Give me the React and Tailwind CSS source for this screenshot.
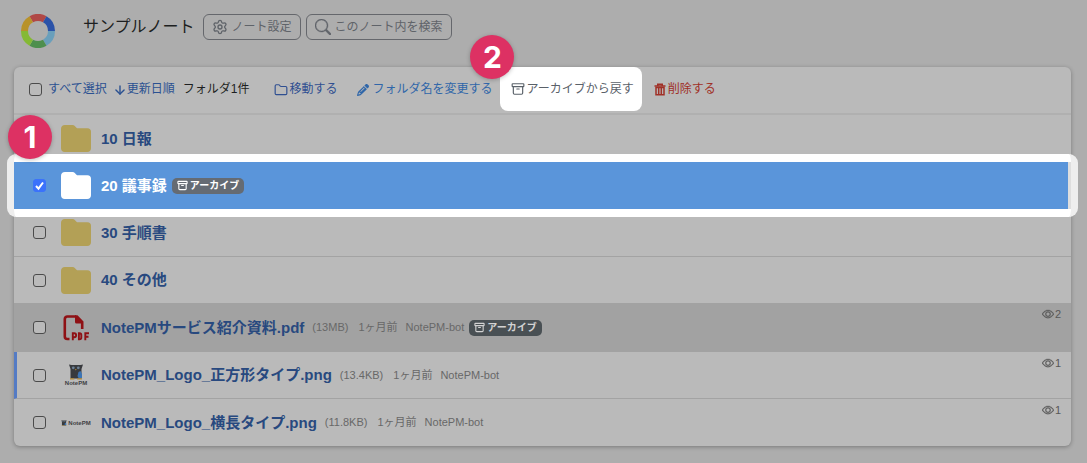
import { useState } from "react";
import { Archive, ArrowDown, Folder, Settings } from "lucide-react";
import { BsEye, BsSearch } from "react-icons/bs";
import { FaPencil } from "react-icons/fa6";

const folders = [
  { id: "f10", name: "10 日報" },
  { id: "f20", name: "20 議事録", archived: true },
  { id: "f30", name: "30 手順書" },
  { id: "f40", name: "40 その他", divider: true },
];

const files = [
  { id: "pdf", name: "NotePMサービス紹介資料.pdf", size: "13MB", views: 2, icon: PdfIcon, archived: true },
  { id: "square", name: "NotePM_Logo_正方形タイプ.png", size: "13.4KB", views: 1, icon: SquareLogo, unread: true },
  { id: "wide", name: "NotePM_Logo_横長タイプ.png", size: "11.8KB", views: 1, icon: WideLogo },
];

function RingLogo() {
  const colors = ["#b04846", "#2b52a8", "#6a9fbb", "#4e8f4e", "#85b935", "#b8922a"];
  const point = (deg, r) => {
    const a = (deg * Math.PI) / 180;
    return `${17 + r * Math.sin(a)} ${17 - r * Math.cos(a)}`;
  };
  return (
    <svg viewBox="0 0 34 34" className="h-[34px] w-[34px]" aria-hidden="true">
      {colors.map((color, i) => {
        const from = i * 60 - 30;
        const to = from + 60;
        return (
          <path
            key={color}
            fill={color}
            d={`M${point(from, 17)}A17 17 0 0 1 ${point(to, 17)}L${point(to, 10)}A10 10 0 0 0 ${point(from, 10)}Z`}
          />
        );
      })}
    </svg>
  );
}

function FolderIcon({ className }) {
  return (
    <svg viewBox="0 0 30 27" className={`h-[27px] w-[30px] ${className}`} fill="currentColor" aria-hidden="true">
      <path d="M4 0h7.500c1 0 1.700.3 2.300.9l1.400 1.500c.6.600 1.200.9 2 .9H26.500C28.700 3.300 30 4.600 30 6.800v16.400c0 2.400-1.400 3.800-3.800 3.800H3.800C1.400 27 0 25.600 0 23.200V4C0 1.500 1.500 0 4 0z" />
    </svg>
  );
}

function TrashIcon() {
  return (
    <svg viewBox="0 0 12 13" className="h-[13px] w-3" fill="none" stroke="currentColor" aria-hidden="true">
      <path d="M.5 3h11M3.800 3V1.200h4.400V3" strokeWidth="1.600" />
      <path d="M2 4.500h8v7.200H2zM4.700 5v6.500M7.300 5v6.500" strokeWidth="1.500" />
    </svg>
  );
}

function PdfIcon() {
  return (
    <svg viewBox="0 0 26 26" className="h-[26px] w-[26px]" fill="none" stroke="#8f1115" aria-hidden="true">
      <path d="M6.500 24H4.300a2.500 2.500 0 0 1-2.500-2.500V4a2.500 2.500 0 0 1 2.500-2.500H13" strokeWidth="2.600" />
      <path d="M12 .2h2.500L20.500 6.500V14h-2.600V8.500h-4.400A1.500 1.500 0 0 1 12 7z" fill="#8f1115" stroke="none" />
      <path d="M9.800 25.300v-7h1.400a1.900 1.900 0 0 1 0 3.900H9.800" strokeWidth="1.900" />
      <path d="M15.900 18.300v6.100h.700c1.100 0 1.700-.600 1.700-1.800v-2.500c0-1.200-.6-1.800-1.700-1.800z" strokeWidth="1.900" />
      <path d="M22.300 25.300v-7H26M22.300 21.700h3.200" strokeWidth="1.900" />
    </svg>
  );
}

function Owl({ className }) {
  return (
    <svg viewBox="0 0 14 16" className={className} aria-hidden="true">
      <path d="M0 .5 2.500 1h9L14 .5 12.500 5v9.500h-11V5z" fill="#383a3e" />
      <circle cx="4.300" cy="3.800" r="1.400" fill="#6d8296" />
      <circle cx="9.300" cy="3.800" r="1.400" fill="#6d8296" />
      <path d="M6 5h1.600l-.8 1.500z" fill="#b78b35" />
      <path d="M9.500 8 11.500 7l1.500 3v4l-3 1-1.500-3z" fill="#3c74b4" />
      <path d="M1 14.200h4l.5 1.300H1zM8.500 14.200H13v1.300H8z" fill="#b78b35" />
    </svg>
  );
}

function SquareLogo() {
  return (
    <span className="flex flex-col items-center">
      <Owl className="h-4 w-3.5" />
      <span className="text-[6px] leading-[6px] font-bold text-[#3f4144]">NotePM</span>
    </span>
  );
}

function WideLogo() {
  return (
    <span className="flex items-center gap-px">
      <Owl className="h-1.5 w-1.5" />
      <span className="text-[6px] leading-[6px] font-bold text-[#3f4144]">NotePM</span>
    </span>
  );
}

function Check({ checked, onChange, label }) {
  return (
    <span className="relative flex h-[13px] w-[13px] shrink-0">
      <input
        type="checkbox"
        aria-label={label}
        checked={checked}
        onChange={onChange}
        className="peer h-[13px] w-[13px] appearance-none rounded-[3px] border border-[#4b4b4b] bg-[#bababa] checked:border-[#3b72fb] checked:bg-[#3b72fb]"
      />
      <svg
        viewBox="0 0 13 13"
        className="pointer-events-none absolute inset-0 hidden peer-checked:block"
        fill="none"
        stroke="#fff"
        strokeWidth="2"
        aria-hidden="true"
      >
        <path d="M3 7l2.500 2.700L10 3.500" />
      </svg>
    </span>
  );
}

function ArchiveBadge({ className }) {
  return (
    <span className={`flex h-4 items-center gap-0.5 rounded-[5px] px-[5px] text-[10px] leading-4 font-bold ${className}`}>
      <Archive className="h-[11px] w-[11px]" strokeWidth={2.4} />
      アーカイブ
    </span>
  );
}

function Step({ className, children }) {
  return (
    <span
      className={`absolute z-20 flex h-11 w-11 items-center justify-center rounded-full bg-[#dd3163] font-[Inter,sans-serif] text-3xl font-bold text-white shadow-[0_1px_4px_rgba(0,0,0,0.25)] ${className}`}
    >
      {children}
    </span>
  );
}

function FolderRow({ folder, selected, onToggle }) {
  const border = folder.divider ? "border-t border-[#a3a3a3]" : "";
  return (
    <li className={`relative h-[47px] ${selected ? "z-10" : ""}`}>
      {selected && (
        <span className="absolute -inset-x-[7px] -inset-y-2 rounded-[9px] border-x-[7px] border-[#eeeeee] bg-white" />
      )}
      <div
        className={`relative flex h-full items-center pl-[19px] ${
          selected ? "border-r-[3px] border-[#dedede] bg-[#5a95da] text-white" : `text-[#28497f] ${border}`
        }`}
      >
        <Check checked={selected} onChange={onToggle} label={folder.name} />
        <FolderIcon className={`ml-[15px] ${selected ? "text-white" : "text-[#b3a056]"}`} />
        <a href="#" className="ml-2.5 text-[15px] font-bold">
          {folder.name}
        </a>
        {folder.archived && <ArchiveBadge className="ml-[5px] bg-[#656b73] text-white" />}
      </div>
      {selected && <Step className="-top-[47px] -left-1.5">1</Step>}
    </li>
  );
}

function FileRow({ file, selected, onToggle, divider }) {
  const Icon = file.icon;
  return (
    <li
      className={`flex items-center ${file.archived ? "h-[49px] bg-[#a2a2a2]" : "h-[47px]"} ${
        file.unread ? "border-l-[3px] border-l-[#547bc4] pl-4" : "pl-[19px]"
      } ${divider ? "border-b border-b-[#a3a3a3]" : ""}`}
    >
      <Check checked={selected} onChange={onToggle} label={file.name} />
      <span className="ml-[15px] flex w-[30px] shrink-0 justify-center">
        <Icon />
      </span>
      <a href="#" className="ml-2.5 text-[15px] font-bold whitespace-nowrap text-[#28497f]">
        {file.name}
      </a>
      <span className="ml-2 flex gap-2.5 text-[11px] whitespace-nowrap text-[#686868]">
        <span>({file.size})</span>
        <span>1ヶ月前</span>
        <span className="-ml-0.5">NotePM-bot</span>
      </span>
      {file.archived && <ArchiveBadge className="ml-[5px] bg-[#495054] text-[#d2d2d2]" />}
      <span className="mt-[3px] mr-2.5 ml-auto flex items-center gap-px self-start text-[11px] leading-4 text-[#585858]">
        <BsEye className="h-3 w-3" stroke="currentColor" strokeWidth={0.4} />
        {file.views}
      </span>
    </li>
  );
}

export default function App() {
  const [selected, setSelected] = useState(["f20"]);
  const [all, setAll] = useState(false);

  const toggle = (id) =>
    setSelected((ids) => (ids.includes(id) ? ids.filter((x) => x !== id) : [...ids, id]));

  const toggleAll = () => {
    setSelected(all ? [] : [...folders, ...files].map((item) => item.id));
    setAll(!all);
  };

  return (
    <div className="min-h-screen bg-[#adadad] font-['Liberation_Sans','Noto_Sans_CJK_JP',sans-serif] text-xs text-[#1d1f21]">
      <header className="flex h-[67px] items-start pt-3.5 pl-[21px]">
        <RingLogo />
        <h1 className="ml-7 text-base leading-[26px]">サンプルノート</h1>
        <button className="ml-2 flex h-[26px] items-center gap-1 rounded-md border border-[#65676c] px-2 text-[#5f6369]">
          <Settings className="h-4 w-4" />
          ノート設定
        </button>
        <button className="ml-[5px] flex h-[26px] items-center gap-1 rounded-md border border-[#65676c] px-2 text-[#5f6369]">
          <BsSearch className="h-4 w-4" stroke="currentColor" strokeWidth={0.4} />
          このノート内を検索
        </button>
      </header>

      <main className="mr-4 ml-3.5 rounded-md bg-[#bababa] shadow-[0_1px_4px_rgba(0,0,0,0.3)]">
        <div className="flex h-12 items-start border-b-2 border-[#b0b0b0] pl-[15px] leading-[45px] whitespace-nowrap">
          <label className="flex items-center gap-1.5 text-[#2b5191]">
            <Check checked={all} onChange={toggleAll} label="すべて選択" />
            すべて選択
          </label>
          <a href="#" className="ml-1.5 flex items-center text-[#2b5191]">
            <ArrowDown className="h-3.5 w-3.5" strokeWidth={2.4} />
            更新日順
          </a>
          <span className="ml-2">フォルダ1件</span>
          <button className="ml-[25px] flex items-center gap-px text-[#2f4f91]">
            <Folder className="h-3.5 w-3.5" />
            移動する
          </button>
          <button className="ml-5 flex items-center gap-[3px] text-[#2f66a9]">
            <FaPencil className="h-3 w-3" />
            フォルダ名を変更する
          </button>
          <span className="relative z-10 ml-2">
            <button className="flex h-11 items-center gap-px rounded-lg bg-white pr-2 pl-[11px] text-[#5a6169]">
              <Archive className="h-3.5 w-3.5" />
              アーカイブから戻す
            </button>
            <Step className="-top-8 -left-[30px]">2</Step>
          </span>
          <button className="ml-3 flex items-center gap-0.5 text-[#a03027]">
            <TrashIcon />
            削除する
          </button>
        </div>

        <ul>
          {folders.map((folder) => (
            <FolderRow
              key={folder.id}
              folder={folder}
              selected={selected.includes(folder.id)}
              onToggle={() => toggle(folder.id)}
            />
          ))}
          {files.map((file, i) => (
            <FileRow
              key={file.id}
              file={file}
              selected={selected.includes(file.id)}
              onToggle={() => toggle(file.id)}
              divider={i === 1}
            />
          ))}
        </ul>
      </main>
    </div>
  );
}
